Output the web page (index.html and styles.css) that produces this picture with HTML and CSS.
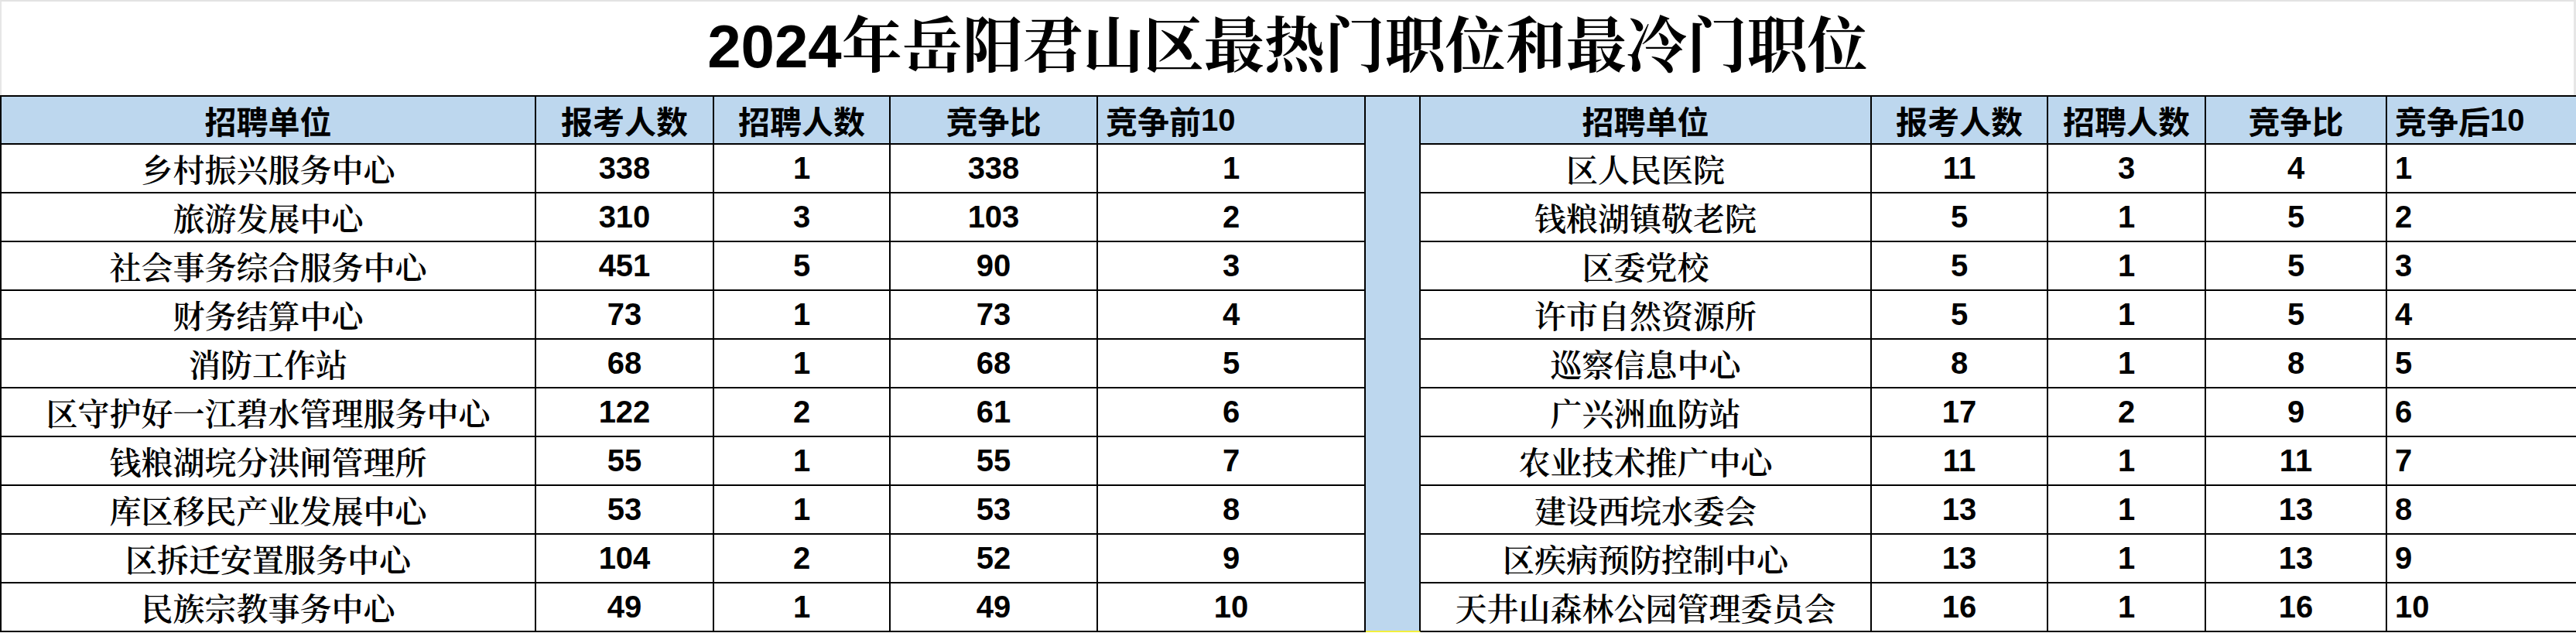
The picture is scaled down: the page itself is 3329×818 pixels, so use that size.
FILE: index.html
```html
<!DOCTYPE html>
<html lang="zh-CN">
<head>
<meta charset="utf-8">
<title>2024年岳阳君山区最热门职位和最冷门职位</title>
<link rel="stylesheet" href="styles.css">
</head>
<body>
<div class="page">
  <div class="titlebar">
    <h1 class="title">2024年岳阳君山区最热门职位和最冷门职位</h1>
  </div>
  <div class="sheet">
    <div class="cell head">招聘单位</div>
    <div class="cell head">报考人数</div>
    <div class="cell head">招聘人数</div>
    <div class="cell head">竞争比</div>
    <div class="cell head left">竞争前<b class="num">10</b></div>
    <div class="divider"></div>
    <div class="cell head">招聘单位</div>
    <div class="cell head">报考人数</div>
    <div class="cell head">招聘人数</div>
    <div class="cell head">竞争比</div>
    <div class="cell head left">竞争后<b class="num">10</b></div>

    <div class="cell name">乡村振兴服务中心</div><div class="cell num">338</div><div class="cell num">1</div><div class="cell num">338</div><div class="cell num">1</div>
    <div class="cell name">区人民医院</div><div class="cell num">11</div><div class="cell num">3</div><div class="cell num">4</div><div class="cell num left">1</div>

    <div class="cell name">旅游发展中心</div><div class="cell num">310</div><div class="cell num">3</div><div class="cell num">103</div><div class="cell num">2</div>
    <div class="cell name">钱粮湖镇敬老院</div><div class="cell num">5</div><div class="cell num">1</div><div class="cell num">5</div><div class="cell num left">2</div>

    <div class="cell name">社会事务综合服务中心</div><div class="cell num">451</div><div class="cell num">5</div><div class="cell num">90</div><div class="cell num">3</div>
    <div class="cell name">区委党校</div><div class="cell num">5</div><div class="cell num">1</div><div class="cell num">5</div><div class="cell num left">3</div>

    <div class="cell name">财务结算中心</div><div class="cell num">73</div><div class="cell num">1</div><div class="cell num">73</div><div class="cell num">4</div>
    <div class="cell name">许市自然资源所</div><div class="cell num">5</div><div class="cell num">1</div><div class="cell num">5</div><div class="cell num left">4</div>

    <div class="cell name">消防工作站</div><div class="cell num">68</div><div class="cell num">1</div><div class="cell num">68</div><div class="cell num">5</div>
    <div class="cell name">巡察信息中心</div><div class="cell num">8</div><div class="cell num">1</div><div class="cell num">8</div><div class="cell num left">5</div>

    <div class="cell name">区守护好一江碧水管理服务中心</div><div class="cell num">122</div><div class="cell num">2</div><div class="cell num">61</div><div class="cell num">6</div>
    <div class="cell name">广兴洲血防站</div><div class="cell num">17</div><div class="cell num">2</div><div class="cell num">9</div><div class="cell num left">6</div>

    <div class="cell name">钱粮湖垸分洪闸管理所</div><div class="cell num">55</div><div class="cell num">1</div><div class="cell num">55</div><div class="cell num">7</div>
    <div class="cell name">农业技术推广中心</div><div class="cell num">11</div><div class="cell num">1</div><div class="cell num">11</div><div class="cell num left">7</div>

    <div class="cell name">库区移民产业发展中心</div><div class="cell num">53</div><div class="cell num">1</div><div class="cell num">53</div><div class="cell num">8</div>
    <div class="cell name">建设西垸水委会</div><div class="cell num">13</div><div class="cell num">1</div><div class="cell num">13</div><div class="cell num left">8</div>

    <div class="cell name">区拆迁安置服务中心</div><div class="cell num">104</div><div class="cell num">2</div><div class="cell num">52</div><div class="cell num">9</div>
    <div class="cell name">区疾病预防控制中心</div><div class="cell num">13</div><div class="cell num">1</div><div class="cell num">13</div><div class="cell num left">9</div>

    <div class="cell name">民族宗教事务中心</div><div class="cell num">49</div><div class="cell num">1</div><div class="cell num">49</div><div class="cell num">10</div>
    <div class="cell name">天井山森林公园管理委员会</div><div class="cell num">16</div><div class="cell num">1</div><div class="cell num">16</div><div class="cell num left">10</div>
  </div>
</div>
</body>
</html>
```

FILE: styles.css
```css
html, body {
  margin: 0;
  padding: 0;
  background: #ffffff;
}

.page {
  width: 3329px;
  height: 818px;
  overflow: hidden;
  color: #000;
}

.titlebar {
  box-sizing: border-box;
  height: 123px;
  border-top: 2px solid #e3e3e3;
  border-left: 2px solid #e6e6e6;
  border-right: 3px solid #e6e6e6;
  padding-top: 19px;
}

.title {
  margin: 0;
  text-align: center;
  font-family: "Liberation Sans", "Noto Serif CJK SC", "Noto Sans CJK SC", sans-serif;
  font-size: 78px;
  line-height: 78px;
  font-weight: 700;
  letter-spacing: 0;
}

.sheet {
  display: grid;
  grid-template-columns: 691px 230px 228px 268px 346px 71px 583px 228px 204px 234px 246px;
  grid-template-rows: 62px repeat(10, 63px);
  border-top: 2px solid #000;
  border-left: 2px solid #000;
  box-sizing: border-box;
  width: 3329px;
}

.cell {
  box-sizing: border-box;
  border-right: 2px solid #000;
  border-bottom: 2px solid #000;
  display: flex;
  align-items: center;
  justify-content: center;
  white-space: nowrap;
  overflow: hidden;
}

.cell.left {
  justify-content: flex-start;
  padding-left: 10px;
}

.head {
  background: #bdd7ee;
  font-family: "Liberation Sans", "Noto Sans CJK SC", sans-serif;
  font-size: 41px;
  font-weight: 700;
}

.head .num {
  font-family: "Liberation Sans", sans-serif;
  font-weight: 700;
  font-size: 40px;
}

.name {
  font-family: "Noto Serif CJK SC", "Noto Sans CJK SC", serif;
  font-size: 41px;
  font-weight: 600;
}

.num {
  font-family: "Liberation Sans", Arial, sans-serif;
  font-size: 40px;
  font-weight: 700;
}

.divider {
  grid-column: 6;
  grid-row: 1 / span 11;
  box-sizing: border-box;
  background: #bdd7ee;
  border-right: 2px solid #000;
  border-bottom: 2px solid #f2ef3c;
}
```
